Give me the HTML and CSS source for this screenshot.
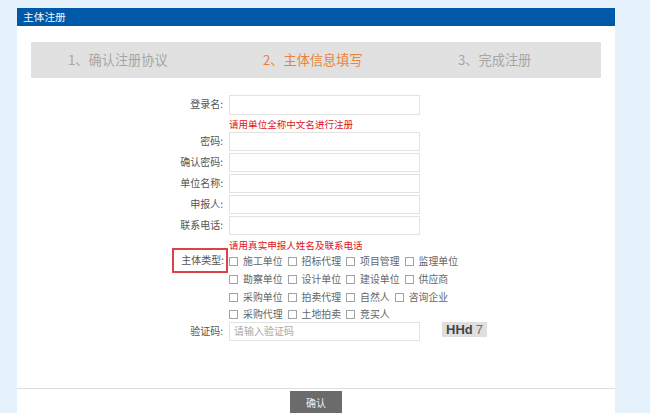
FILE: index.html
```html
<!DOCTYPE html>
<html lang="zh">
<head>
<meta charset="utf-8">
<title>主体注册</title>
<link rel="stylesheet" href="styles.css">
</head>
<body>
<main class="panel">
  <h1 class="title">主体注册</h1>
  <ol class="steps">
    <li class="step step-1">1、确认注册协议</li>
    <li class="step step-2 active">2、主体信息填写</li>
    <li class="step step-3">3、完成注册</li>
  </ol>
  <form class="form">
    <div class="row row-first"><label class="label">登录名:</label><input class="input" type="text"></div>
    <p class="hint hint-first">请用单位全称中文名进行注册</p>
    <div class="row"><label class="label">密码:</label><input class="input" type="text"></div>
    <div class="row"><label class="label">确认密码:</label><input class="input" type="text"></div>
    <div class="row"><label class="label">单位名称:</label><input class="input" type="text"></div>
    <div class="row"><label class="label">申报人:</label><input class="input" type="text"></div>
    <div class="row"><label class="label">联系电话:</label><input class="input" type="text"></div>
    <p class="hint hint-second">请用真实申报人姓名及联系电话</p>
    <div class="type-row">
      <div class="type-label-box"><span class="type-label">主体类型:</span></div>
      <div class="options">
        <div class="option-line">
          <span class="opt"><i class="box"></i>施工单位</span><span class="opt"><i class="box"></i>招标代理</span><span class="opt"><i class="box"></i>项目管理</span><span class="opt"><i class="box"></i>监理单位</span>
        </div>
        <div class="option-line">
          <span class="opt"><i class="box"></i>勘察单位</span><span class="opt"><i class="box"></i>设计单位</span><span class="opt"><i class="box"></i>建设单位</span><span class="opt"><i class="box"></i>供应商</span>
        </div>
        <div class="option-line">
          <span class="opt"><i class="box"></i>采购单位</span><span class="opt"><i class="box"></i>拍卖代理</span><span class="opt"><i class="box"></i>自然人</span><span class="opt"><i class="box"></i>咨询企业</span>
        </div>
        <div class="option-line option-last">
          <span class="opt"><i class="box"></i>采购代理</span><span class="opt"><i class="box"></i>土地拍卖</span><span class="opt"><i class="box"></i>竞买人</span>
        </div>
      </div>
    </div>
    <div class="row row-captcha">
      <label class="label">验证码:</label>
      <input class="input input-captcha" type="text" placeholder="请输入验证码">
      <span class="captcha">HHd<em class="captcha-last">7</em></span>
    </div>
  </form>
  <footer class="actions"><button class="confirm" type="button">确认</button></footer>
</main>
</body>
</html>
```
FILE: styles.css
```css
* { box-sizing: border-box; }
html, body { height: 413px; overflow: hidden; }
body {
  margin: 0;
  padding: 8px 35px 0 17px;
  background: #e6f2fb;
  font-family: "Noto Sans CJK SC", "Liberation Sans", sans-serif;
  font-size: 10px;
  color: #555;
}
.panel { background: #fff; height: 405px; display: flex; flex-direction: column; }
.title {
  margin: 0;
  height: 18px;
  padding-left: 6px;
  background: #0059a8;
  color: #f2f6fb;
  font-size: 10.7px;
  font-weight: 400;
  line-height: 18px;
}
.steps {
  list-style: none;
  margin: 16px 14px 0;
  padding: 0 0 2px;
  height: 36px;
  background: #e1e1e1;
  display: flex;
  align-items: center;
  font-size: 13.2px;
  color: #a6a6a6;
}
.step-1 { margin-left: 37px; width: 195px; }
.step-2 { width: 195px; }
.active { color: #ee8139; }
.form { padding-top: 17px; display: flex; flex-direction: column; }
.row { display: flex; align-items: center; height: 19px; margin-bottom: 2px; }
.row-first { height: 20px; margin-bottom: 0; }
.label { width: 212px; padding: 0 6px 3px 0; text-align: right; white-space: nowrap; }
.input {
  width: 191px;
  height: 100%;
  margin: 0;
  padding: 0 4px;
  border: 1px solid #e2e2e2;
  background: #fff;
  font: inherit;
}
.input-captcha { padding: 0 3px 2px 4px; }
.input::placeholder { color: #a8a8a8; }
.hint {
  margin: 0 0 0 212px;
  color: #e0121a;
  font-size: 9.55px;
  line-height: 12px;
  white-space: nowrap;
}
.hint-first { height: 17px; padding-top: 3px; }
.hint-second { height: 14px; padding-top: 3px; margin-top: -1px; }
.type-row { display: flex; align-items: flex-start; }
.type-label-box { width: 212px; height: 26px; padding-left: 155px; display: flex; }
.type-label {
  width: 56px;
  height: 25px;
  margin-top: -2px;
  border: 2px solid #d9434a;
  text-align: right;
  padding-right: 2px;
  line-height: 19px;
  white-space: nowrap;
}
.options { display: flex; flex-direction: column; color: #666; font-size: 9.9px; padding-top: 2px; }
.option-line { display: flex; height: 18px; align-items: center; white-space: nowrap; }
.option-last { height: 16px; }
.opt { display: inline-flex; align-items: center; margin-right: 5px; }
.box {
  width: 9px;
  height: 9px;
  margin-right: 5px;
  border: 1px solid #a3a3a3;
  background: #fff;
}
.row-captcha { margin-bottom: 0; }
.captcha {
  margin-left: 22px;
  width: 45px;
  height: 15px;
  align-self: flex-start;
  background: repeating-linear-gradient(60deg, #e3dce8 0 2px, #dde2d8 2px 4px);
  color: #47463c;
  font-family: "Liberation Sans", sans-serif;
  font-size: 13px;
  font-weight: 700;
  line-height: 15px;
  text-align: center;
}
.captcha-last { font-style: normal; font-weight: 400; margin-left: 3px; color: #6f6f6f; }
.actions {
  margin-top: auto;
  height: 25px;
  border-top: 1px solid #ddd;
  padding-left: 273px;
  padding-top: 2px;
}
.confirm {
  display: block;
  width: 52px;
  height: 22px;
  padding: 0;
  border: 0;
  background: #6b6b6b;
  color: #eee;
  font: inherit;
}
```
